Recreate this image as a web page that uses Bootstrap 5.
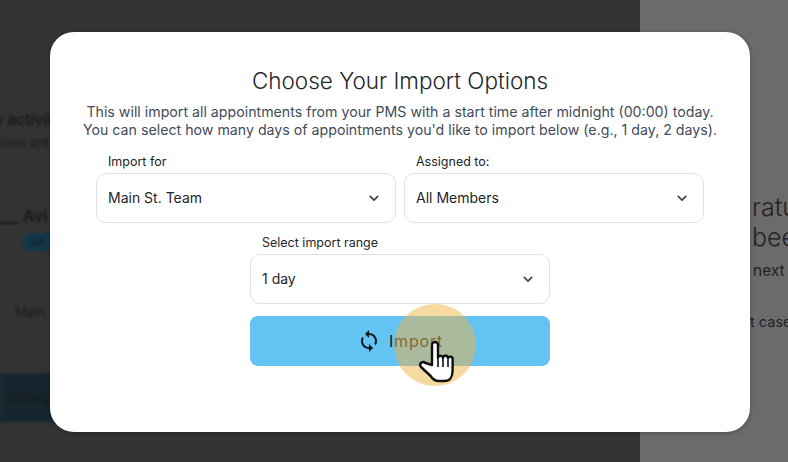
<!doctype html>
<html lang="en">

<head>
    <meta charset="UTF-8" />
    <meta name="viewport" content="width=device-width, initial-scale=1" />
    <title>Import Options</title>
    <link href="https://cdn.jsdelivr.net/npm/bootstrap@5.3.3/dist/css/bootstrap.min.css" rel="stylesheet">
    <style>
        html, body {
            height: 100%;
            overflow: hidden;
        }

        body {
            font-family: "Inter", "Liberation Sans", sans-serif;
            background-color: #333;
        }

        .app-shell {
            width: 788px;
            height: 462px;
        }

        .left-pane {
            width: 640px;
            background-color: #333;
            color: #1c1c1c;
            overflow: hidden;
            white-space: nowrap;
        }

        .left-inner {
            filter: blur(1px);
            height: 462px;
        }

        .right-pane {
            background-color: #6b6b6b;
            color: #232323;
            overflow: hidden;
            white-space: nowrap;
        }

        .bg-heading {
            font-weight: 700;
            font-size: 15px;
            line-height: 22px;
            padding-top: 109px;
            margin-left: -33px;
        }

        .bg-sub {
            font-size: 13px;
            line-height: 22px;
        }

        .bg-name {
            font-weight: 700;
            font-size: 16px;
            margin: 51px 0 0 -4px;
            line-height: 24px;
        }

        .bg-tag {
            width: 70px;
            height: 18px;
            margin: 5px 0 0 22px;
            border-radius: 9px;
            background-color: #12384c;
            font-size: 12px;
            line-height: 18px;
            padding-left: 8px;
        }

        .bg-team {
            font-size: 13px;
            margin: 52px 0 0 15px;
        }

        .bg-manage {
            width: 240px;
            height: 49px;
            margin-top: 50px;
            background-color: #15262f;
            font-size: 13px;
            line-height: 49px;
            padding-left: 8px;
        }

        .right-big {
            font-size: 25px;
            line-height: 30px;
            font-weight: 300;
            padding: 192px 0 0 112px;
        }

        .right-small {
            font-size: 15.5px;
            margin: 9px 0 0 113px;
            line-height: 20px;
        }

        .right-case {
            font-size: 14.5px;
            margin: 31px 0 0 110px;
            line-height: 20px;
        }

        .import-dialog {
            position: absolute;
            left: 50px;
            top: 32px;
            width: 700px;
            height: 400px;
            background-color: #fff;
            border-radius: 24px;
            padding: 34px 30px 0;
            box-shadow: 0 1px 4px rgba(0, 0, 0, .3);
        }

        .dialog-title {
            font-size: 22.5px;
            line-height: 30px;
            font-weight: 300;
            color: #23262b;
            margin-bottom: 7px;
        }

        .dialog-text {
            font-size: 14.2px;
            line-height: 18px;
            color: #424c5a;
            margin-bottom: 14px;
            white-space: nowrap;
        }

        .field-label {
            font-size: 12.5px;
            line-height: 18px;
            color: #22262b;
            padding-left: 12px;
            margin-bottom: 2px;
        }

        .field-select {
            height: 50px;
            border-radius: 10px;
            border-color: #e0e1e8;
            font-size: 14px;
            color: #23262b;
            padding: 0 36px 2px 11px;
            background-image: url("data:image/svg+xml,%3csvg xmlns='http://www.w3.org/2000/svg' viewBox='0 0 12 8'%3e%3cpath fill='none' stroke='%233c4450' stroke-width='2' stroke-linecap='round' stroke-linejoin='round' d='M1.5 1.5 6 6l4.5-4.5'/%3e%3c/svg%3e");
            background-position: right 16px center;
            background-size: 10px 7px;
        }

        .field-row {
            padding: 0 16px;
            margin-bottom: 11px;
        }

        .range-col {
            width: 300px;
        }

        .import-btn {
            height: 50px;
            border: 0;
            border-radius: 8px;
            background-color: #63c3f2;
            color: #15181c;
            font-size: 16px;
            letter-spacing: .8px;
        }

        .range-select {
            margin-bottom: 12px;
        }

        .click-spot {
            position: absolute;
            left: 344px;
            top: 272px;
            width: 82px;
            height: 82px;
            border-radius: 50%;
            background-color: rgba(240, 180, 70, .5);
        }

        .hand-cursor {
            position: absolute;
            left: 368px;
            top: 308px;
        }
    </style>
</head>

<body>
    <div class="app-shell d-flex">
        <div class="left-pane flex-shrink-0">
            <div class="left-inner">
                <div class="bg-heading">Daily activity</div>
                <div class="bg-sub">ious are</div>
                <div class="bg-name">___ Avi</div>
                <div class="bg-tag">Sa</div>
                <div class="bg-team">Main</div>
                <div class="bg-manage">Manage</div>
            </div>
        </div>
        <div class="right-pane flex-grow-1">
            <div class="right-big">
                <div>ratu</div>
                <div>bee</div>
            </div>
            <div class="right-small">next</div>
            <div class="right-case">t case</div>
        </div>
    </div>

    <div class="import-dialog">
        <h5 class="dialog-title text-center">Choose Your Import Options</h5>
        <p class="dialog-text text-center">This will import all appointments from your PMS with a start time after midnight (00:00) today.<br>You can select how many days of appointments you'd like to import below (e.g., 1 day, 2 days).</p>
        <div class="field-row d-flex gap-2">
            <div class="w-50">
                <div class="field-label">Import for</div>
                <select class="form-select field-select">
                    <option>Main St. Team</option>
                </select>
            </div>
            <div class="w-50">
                <div class="field-label">Assigned to:</div>
                <select class="form-select field-select">
                    <option>All Members</option>
                </select>
            </div>
        </div>
        <div class="range-col mx-auto">
            <div class="field-label">Select import range</div>
            <select class="form-select field-select range-select">
                <option>1 day</option>
            </select>
            <button class="btn import-btn w-100 d-flex align-items-center justify-content-center gap-2">
                <svg width="24" height="24" viewBox="0 0 24 24" fill="currentColor">
                    <path d="M12 4V1L8 5l4 4V6c3.31 0 6 2.69 6 6 0 1.01-.25 1.97-.7 2.8l1.46 1.46C19.54 15.03 20 13.57 20 12c0-4.42-3.58-8-8-8zm0 14c-3.31 0-6-2.69-6-6 0-1.01.25-1.97.7-2.8L5.24 7.74C4.46 8.97 4 10.43 4 12c0 4.42 3.58 8 8 8v3l4-4-4-4v3z" />
                </svg>
                Import
            </button>
        </div>
        <div class="click-spot"></div>
        <svg class="hand-cursor" width="37" height="43" viewBox="0 0 37 43">
            <path d="M14 25V5a3 3 0 0 1 6 0v12.500a2.600 2.600 0 0 1 5 .5 2.500 2.500 0 0 1 5 .5 2.300 2.300 0 0 1 4.600 1V31c0 6-3 10-8 10h-6c-4 0-6-2-8-5L3 27c-2.500-3.500 1.500-6.500 4.500-4z" fill="#fff" stroke="#111" stroke-width="2.4" stroke-linejoin="round" />
            <path d="M20 18v9M25 18.500v8.500M30 19.500v7.500" stroke="#111" stroke-width="1.6" fill="none" />
        </svg>
    </div>

    <script src="https://cdn.jsdelivr.net/npm/bootstrap@5.3.3/dist/js/bootstrap.bundle.min.js"></script>
</body>

</html>
